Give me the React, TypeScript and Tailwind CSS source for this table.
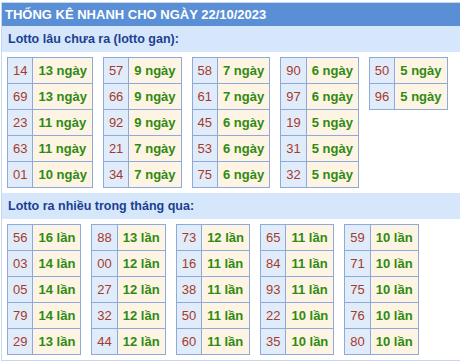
const gan: [string, string][][] = [
  [["14", "13 ngày"], ["69", "13 ngày"], ["23", "11 ngày"], ["63", "11 ngày"], ["01", "10 ngày"]],
  [["57", "9 ngày"], ["66", "9 ngày"], ["92", "9 ngày"], ["21", "7 ngày"], ["34", "7 ngày"]],
  [["58", "7 ngày"], ["61", "7 ngày"], ["45", "6 ngày"], ["53", "6 ngày"], ["75", "6 ngày"]],
  [["90", "6 ngày"], ["97", "6 ngày"], ["19", "5 ngày"], ["31", "5 ngày"], ["32", "5 ngày"]],
  [["50", "5 ngày"], ["96", "5 ngày"]],
];

const nhieu: [string, string][][] = [
  [["56", "16 lần"], ["03", "14 lần"], ["05", "14 lần"], ["79", "14 lần"], ["29", "13 lần"]],
  [["88", "13 lần"], ["00", "12 lần"], ["27", "12 lần"], ["32", "12 lần"], ["44", "12 lần"]],
  [["73", "12 lần"], ["16", "11 lần"], ["38", "11 lần"], ["50", "11 lần"], ["60", "11 lần"]],
  [["65", "11 lần"], ["84", "11 lần"], ["93", "11 lần"], ["22", "10 lần"], ["35", "10 lần"]],
  [["59", "10 lần"], ["71", "10 lần"], ["75", "10 lần"], ["76", "10 lần"], ["80", "10 lần"]],
];

function LottoTable({ rows }: { rows: [string, string][] }) {
  return (
    <table className="border-collapse self-start">
      <tbody>
        {rows.map(([num, count]) => (
          <tr key={num} className="h-[26px]">
            <td className="border border-[#8eaadc] bg-[#e1ecfb] px-[5px] text-[13px] text-[#a53a2c]">{num}</td>
            <td className="border border-[#8eaadc] bg-[#fdf4e3] px-[5px] text-[13px] font-bold text-[#2f8a12] whitespace-nowrap">
              {count}
            </td>
          </tr>
        ))}
      </tbody>
    </table>
  );
}

function Section({ title, tables }: { title: string; tables: [string, string][][] }) {
  return (
    <div>
      <div className="h-[26px] bg-[#d6e7fb] pl-[6px] flex items-center text-[12.5px] font-bold text-[#1b3f92]">
        {title}
      </div>
      <div className="flex gap-[10px] px-[5px] py-[5px]">
        {tables.map((t, i) => (
          <LottoTable key={i} rows={t} />
        ))}
      </div>
    </div>
  );
}

export default function App() {
  return (
    <div className="w-[460px] h-[362px] overflow-hidden bg-white pt-[2px] pl-px" style={{ fontFamily: '"Liberation Sans", Arial, sans-serif' }}>
      <div className="w-[480px] h-[359px] border border-[#c8d7ec]">
        <div className="h-[23px] bg-[#5b8fd5] pl-[3px] flex items-center text-[13px] font-bold text-white">
          THỐNG KÊ NHANH CHO NGÀY 22/10/2023
        </div>
        <Section title="Lotto lâu chưa ra (lotto gan):" tables={gan} />
        <Section title="Lotto ra nhiều trong tháng qua:" tables={nhieu} />
      </div>
    </div>
  );
}
